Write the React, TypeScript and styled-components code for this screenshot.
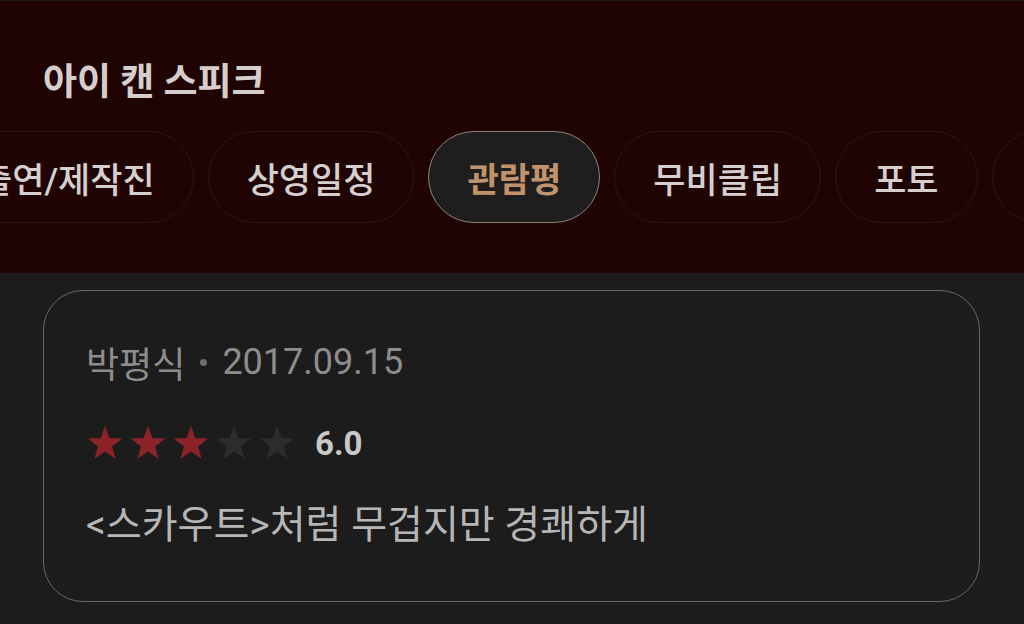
import React from "react";
import styled, { createGlobalStyle } from "styled-components";

const Global = createGlobalStyle`
  html, body {
    margin: 0;
    padding: 0;
    background: #1c1c1c;
    width: 1024px;
    height: 624px;
    overflow: hidden;
  }
  body {
    font-family: Roboto, "Noto Sans CJK KR", "Noto Sans", sans-serif;
  }
`;

const Page = styled.div`
  width: 1024px;
  height: 624px;
  background: #1c1c1c;
  display: flex;
  flex-direction: column;
`;

const Header = styled.header`
  background: #200303;
  border-top: 1px solid #1c1c1c;
  padding: 59px 0 50px;
  display: flex;
  flex-direction: column;
  gap: 25px;
  overflow: hidden;
`;

const Title = styled.h1`
  margin: 0 0 0 43px;
  font-size: 37px;
  line-height: 46px;
  font-weight: 700;
  color: #d6cdcd;
`;

const TabTrack = styled.nav`
  display: flex;
  gap: 14px;
  margin-left: -59px;
  white-space: nowrap;
`;

const Tab = styled.div<{ $active?: boolean }>`
  flex: none;
  height: 92px;
  min-width: 140px;
  box-sizing: border-box;
  padding: 0 38px;
  border-radius: 46px;
  display: flex;
  align-items: center;
  justify-content: center;
  font-size: ${(p) => (p.$active ? "34px" : "35px")};
  font-weight: ${(p) => (p.$active ? 700 : 500)};
  color: ${(p) => (p.$active ? "#c2926b" : "#d6cfcf")};
  background: ${(p) => (p.$active ? "#1e1e1e" : "transparent")};
  border: 1.5px solid ${(p) => (p.$active ? "#8e817a" : "#33140f")};
`;

const Card = styled.section`
  margin: 17px 44px 0 43px;
  height: 312px;
  box-sizing: border-box;
  border: 1.5px solid #666;
  border-radius: 40px;
  padding: 47px 42px 0;
  display: flex;
  flex-direction: column;
`;

const Meta = styled.div`
  display: flex;
  align-items: center;
  height: 48px;
  font-size: 36px;
  color: #8d8d8d;
  gap: 13px;
`;

const Dot = styled.span`
  width: 7px;
  height: 7px;
  border-radius: 50%;
  background: #6e6e6e;
  margin: 0 2px;
`;

const RatingRow = styled.div`
  margin-top: 35px;
  height: 44px;
  display: flex;
  align-items: center;
`;

const Stars = styled.div`
  display: flex;
  gap: 5px;
  margin-right: 19px;
`;

const Score = styled.span`
  font-size: 33px;
  font-weight: 700;
  color: #c9c9c9;
`;

const Review = styled.p`
  margin: 36px 0 0;
  height: 48px;
  line-height: 48px;
  font-size: 39px;
  color: #b6b6b6;
  white-space: nowrap;
`;

const Star = ({ filled }: { filled: boolean }) => (
  <svg width="38" height="36" viewBox="0 0 24 23">
    <polygon
      points="12,0.5 14.8,8.3 23,8.6 16.5,13.7 18.8,21.8 12,17 5.2,21.8 7.5,13.7 1,8.6 9.2,8.3"
      fill={filled ? "#8b2227" : "#2b2c2e"}
    />
  </svg>
);

const tabs = ["출연/제작진", "상영일정", "관람평", "무비클립", "포토", ""];

export default function App() {
  return (
    <Page>
      <Global />
      <Header>
        <Title>아이 캔 스피크</Title>
        <TabTrack>
          {tabs.map((t, i) => (
            <Tab key={i} $active={t === "관람평"}>
              {t}
            </Tab>
          ))}
        </TabTrack>
      </Header>
      <Card>
        <Meta>
          <span>박평식</span>
          <Dot />
          <span>2017.09.15</span>
        </Meta>
        <RatingRow>
          <Stars>
            {[0, 1, 2, 3, 4].map((i) => (
              <Star key={i} filled={i < 3} />
            ))}
          </Stars>
          <Score>6.0</Score>
        </RatingRow>
        <Review>&lt;스카우트&gt;처럼 무겁지만 경쾌하게</Review>
      </Card>
    </Page>
  );
}
